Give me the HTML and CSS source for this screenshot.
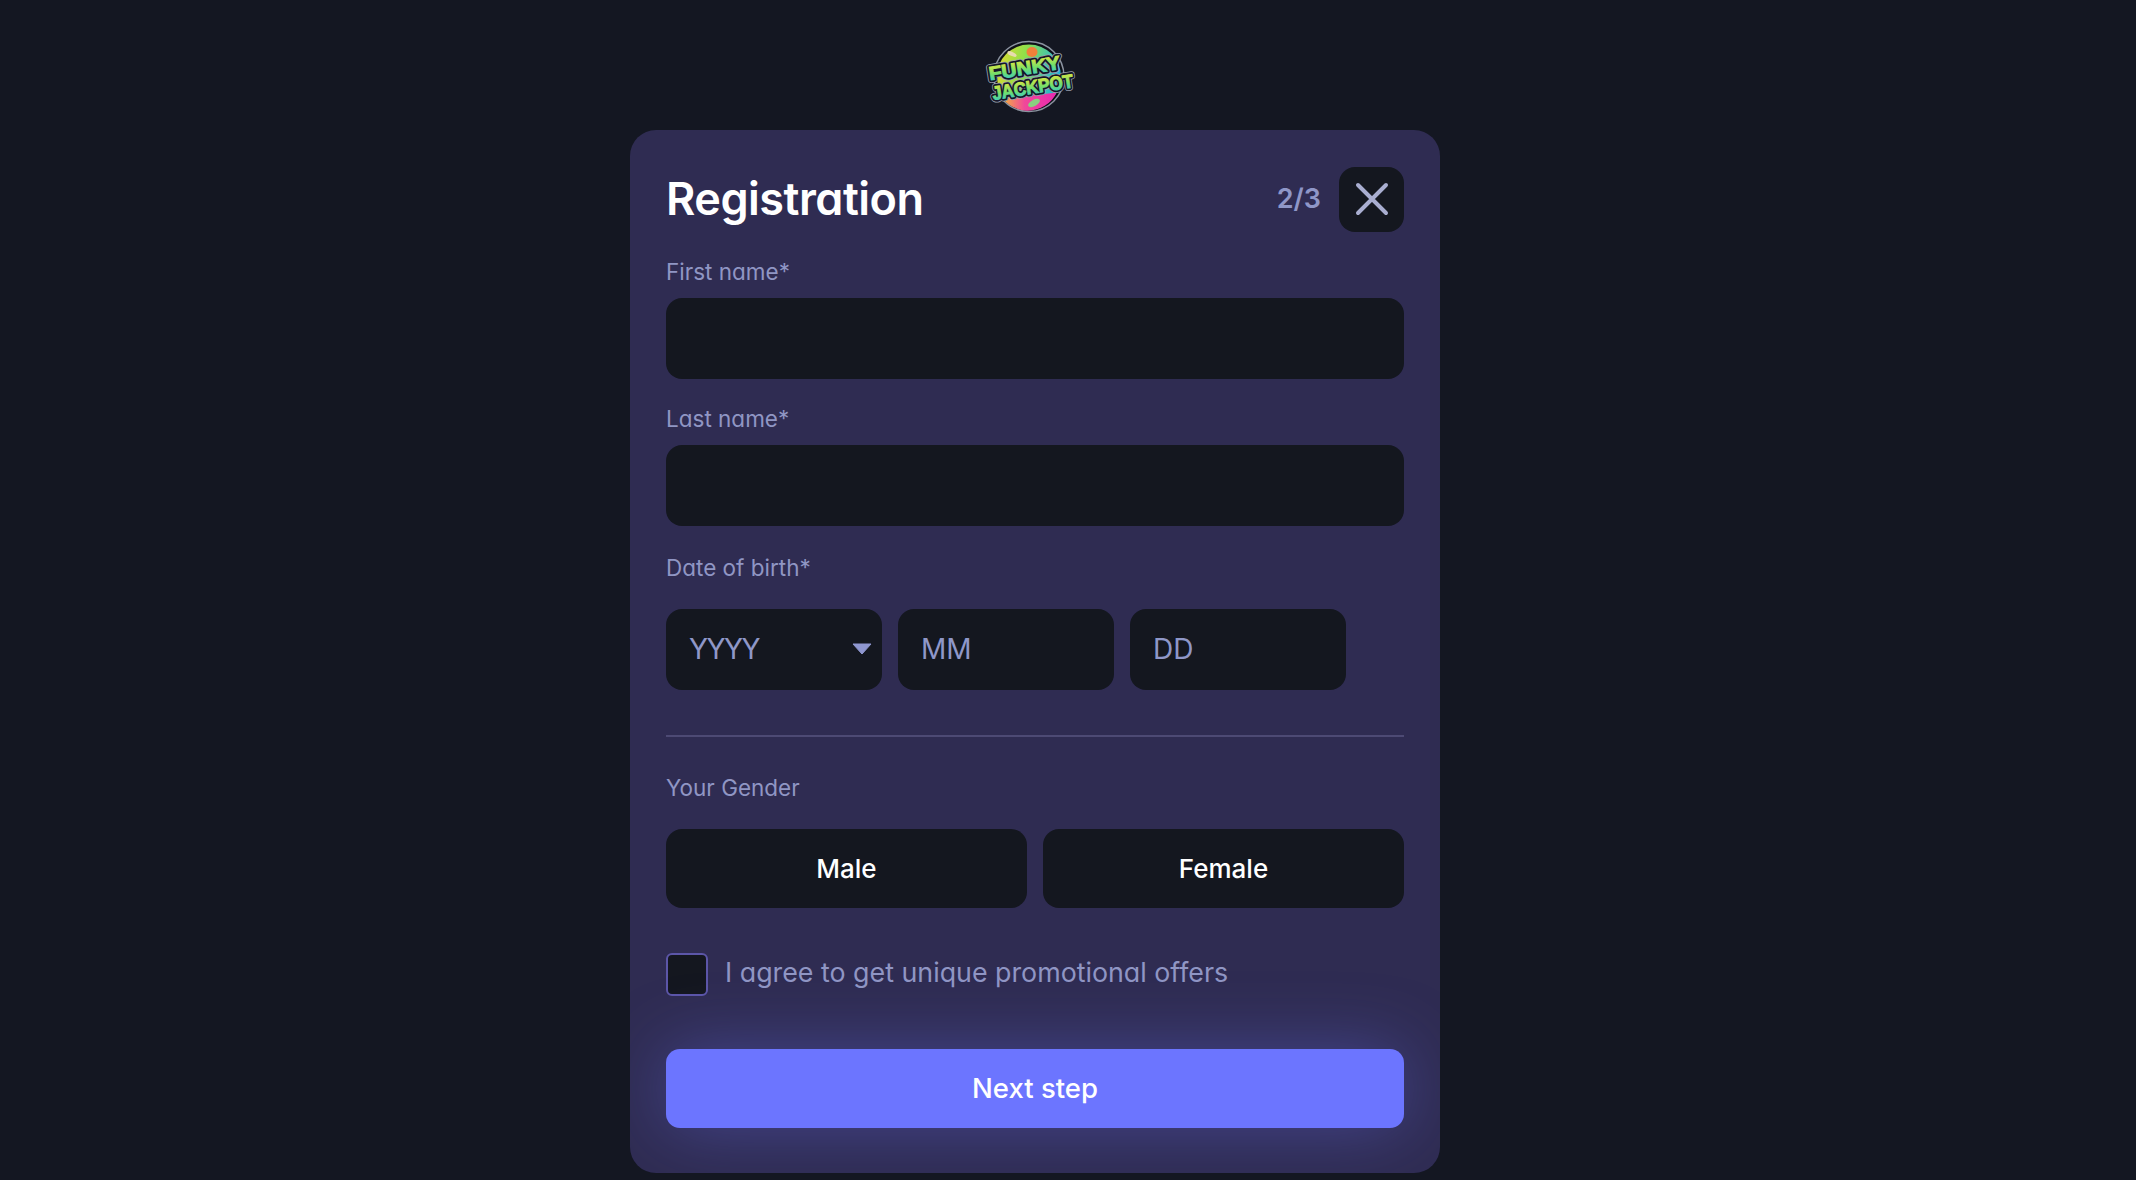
FILE: index.html
```html
<!DOCTYPE html>
<html lang="en">

<head>
    <meta charset="UTF-8">
    <meta name="viewport" content="width=device-width, initial-scale=1.0">
    <title>Registration - Funky Jackpot</title>
    <link rel="stylesheet" href="styles.css">
</head>

<body>
    <div class="page">
        <div class="logo">
            <svg width="110" height="74" viewBox="-8 0 110 74">
                <defs>
                    <linearGradient id="discFill" x1="0" y1="0" x2="1" y2="0.2">
                        <stop offset="0" stop-color="#e6d82e"/>
                        <stop offset="0.45" stop-color="#8fe04a"/>
                        <stop offset="1" stop-color="#1fb6d8"/>
                    </linearGradient>
                    <linearGradient id="discLower" x1="0" y1="0" x2="1" y2="0">
                        <stop offset="0" stop-color="#f7c92a"/>
                        <stop offset="0.45" stop-color="#f0489a"/>
                        <stop offset="1" stop-color="#e828b0"/>
                    </linearGradient>
                    <linearGradient id="textFill" x1="0" y1="0" x2="0" y2="1">
                        <stop offset="0" stop-color="#f4e83a"/>
                        <stop offset="0.55" stop-color="#74e06a"/>
                        <stop offset="1" stop-color="#2ec4d8"/>
                    </linearGradient>
                </defs>
                <circle cx="47" cy="36.5" r="35" fill="#0e1018" stroke="#8b93a0" stroke-width="1.5"/>
                <circle cx="47" cy="36.5" r="32" fill="url(#discFill)"/>
                <path d="M16 50a32 32 0 0 0 59 2c-18 4-40 4-59-2z" fill="url(#discLower)"/>
                <ellipse cx="50" cy="12" rx="5.5" ry="5" fill="#f0803a"/>
                <ellipse cx="30" cy="14" rx="5" ry="2" fill="#e8dcb0" transform="rotate(25 30 14)"/>
                <ellipse cx="52" cy="63" rx="6.5" ry="3.2" fill="#8ad080" transform="rotate(-28 52 63)"/>
                <g transform="rotate(-9 47 37)">
                    <text class="logo-line logo-edge" x="44" y="34" textLength="72" lengthAdjust="spacingAndGlyphs">FUNKY</text>
                    <text class="logo-line logo-edge" x="49" y="54" textLength="82" lengthAdjust="spacingAndGlyphs">JACKPOT</text>
                    <text class="logo-line logo-rim" x="44" y="34" textLength="72" lengthAdjust="spacingAndGlyphs">FUNKY</text>
                    <text class="logo-line logo-rim" x="49" y="54" textLength="82" lengthAdjust="spacingAndGlyphs">JACKPOT</text>
                    <text class="logo-line" x="44" y="34" textLength="72" lengthAdjust="spacingAndGlyphs">FUNKY</text>
                    <text class="logo-line" x="49" y="54" textLength="82" lengthAdjust="spacingAndGlyphs">JACKPOT</text>
                </g>
            </svg>
        </div>

        <div class="panel">
            <div class="panel-head">
                <h1>Registration</h1>
                <div class="head-right">
                    <span class="step">2/3</span>
                    <button type="button" class="close-button" aria-label="Close">
                        <svg width="34" height="34" viewBox="0 0 34 34">
                            <path d="M3 3L31 31M31 3L3 31" stroke="#a9aed0" stroke-width="4" stroke-linecap="round"/>
                        </svg>
                    </button>
                </div>
            </div>

            <form class="reg-form">
                <label class="field-label" for="firstName">First name*</label>
                <input class="text-input" type="text" id="firstName">

                <label class="field-label" for="lastName">Last name*</label>
                <input class="text-input" type="text" id="lastName">

                <div class="field-label dob-label">Date of birth*</div>
                <div class="dob-row">
                    <div class="select-wrap">
                        <select class="dob-input year-select">
                            <option>YYYY</option>
                        </select>
                        <svg class="select-arrow" width="20" height="12" viewBox="0 0 20 12">
                            <path d="M1 1h18l-9 10z" fill="#8f97d0" stroke="#8f97d0" stroke-linejoin="round"/>
                        </svg>
                    </div>
                    <input class="dob-input" type="text" placeholder="MM">
                    <input class="dob-input" type="text" placeholder="DD">
                </div>

                <hr class="divider">

                <div class="field-label gender-label">Your Gender</div>
                <div class="gender-row">
                    <button type="button" class="gender-button">Male</button>
                    <button type="button" class="gender-button">Female</button>
                </div>

                <label class="promo-row">
                    <input type="checkbox" class="promo-check">
                    <span class="promo-text">I agree to get unique promotional offers</span>
                </label>

                <button type="submit" class="next-button">Next step</button>
            </form>
        </div>
    </div>
</body>
</html>
```

FILE: styles.css
```css
* {
    box-sizing: border-box;
}

html,
body {
    height: 100%;
}

body {
    margin: 0;
    background-color: #141722;
    color: #fff;
    font-family: Inter, "Noto Sans", sans-serif;
    font-feature-settings: "cv11" 1;
    overflow: hidden;
}

.page {
    display: flex;
    flex-direction: column;
    align-items: center;
    padding-top: 40px;
    padding-right: 66px;
}

.logo {
    height: 74px;
    margin-bottom: 16px;
    margin-right: 12px;
}

.logo svg {
    display: block;
}

.logo-line {
    font-family: "Liberation Sans", sans-serif;
    font-weight: bold;
    font-size: 19px;
    text-anchor: middle;
    fill: url(#textFill);
    stroke: url(#textFill);
    stroke-width: 1px;
}

.logo-rim {
    fill: #14162a;
    stroke: #14162a;
    stroke-width: 4.5px;
    stroke-linejoin: round;
}

.logo-edge {
    fill: #9aa0ae;
    stroke: #9aa0ae;
    stroke-width: 6px;
    stroke-linejoin: round;
}

.panel {
    width: 810px;
    padding: 36px 36px 45px;
    overflow: hidden;
    background-color: #2f2c52;
    border-radius: 26px;
}

.panel-head {
    display: flex;
    justify-content: space-between;
    align-items: center;
    height: 66px;
    margin-bottom: 25px;
}

.panel-head h1 {
    margin: 0 0 2px;
    font-size: 45px;
    font-weight: 600;
    letter-spacing: -0.5px;
}

.head-right {
    display: flex;
    align-items: center;
    gap: 18px;
}

.step {
    margin-bottom: 2px;
    color: #8f97c8;
    font-size: 27px;
    font-weight: 600;
}

.close-button {
    display: flex;
    align-items: center;
    justify-content: center;
    width: 65px;
    height: 65px;
    padding: 0;
    border: none;
    border-radius: 16px;
    background-color: #14171f;
}

.reg-form {
    display: flex;
    flex-direction: column;
}

.field-label {
    height: 30px;
    margin-bottom: 11px;
    color: #9096c4;
    font-size: 22.5px;
    line-height: 30px;
}

.text-input {
    width: 100%;
    height: 81px;
    margin-bottom: 25px;
    border: none;
    border-radius: 16px;
    background-color: #14171f;
}

.dob-label {
    margin-top: 2px;
    margin-bottom: 26px;
}

.dob-row {
    display: flex;
    gap: 16px;
}

.select-wrap {
    position: relative;
    width: 216px;
}

.dob-input {
    width: 216px;
    height: 81px;
    padding: 0 23px 2px;
    border: none;
    border-radius: 16px;
    background-color: #14171f;
    color: #8f97c8;
    font-family: inherit;
    font-size: 28px;
    appearance: none;
    outline: none;
}

.dob-input::placeholder {
    color: #8f97c8;
    opacity: 1;
}

.year-select {
    letter-spacing: -1.5px;
}

.select-arrow {
    position: absolute;
    top: 34px;
    right: 10px;
}

.divider {
    width: 100%;
    height: 2px;
    margin: 45px 0 36px;
    border: none;
    background-color: #4d4a74;
}

.gender-label {
    margin-bottom: 26px;
}

.gender-row {
    display: flex;
    gap: 16px;
}

.gender-button {
    flex: 1;
    height: 79px;
    border: none;
    border-radius: 16px;
    background-color: #14171f;
    color: #fff;
    font-family: inherit;
    font-size: 26px;
    font-weight: 500;
}

.promo-row {
    display: flex;
    align-items: center;
    gap: 17px;
    margin-top: 45px;
    color: #9096c4;
    font-size: 26.8px;
}

.promo-text {
    margin-bottom: 6px;
}

.promo-check {
    width: 42px;
    height: 43px;
    margin: 0;
    border: 2px solid #5c56a8;
    border-radius: 6px;
    background-color: #14171f;
    appearance: none;
}

.next-button {
    width: 100%;
    height: 79px;
    margin-top: 53px;
    padding-bottom: 2px;
    border: none;
    border-radius: 14px;
    background-color: #6c75ff;
    box-shadow: 0 0 70px rgba(108, 117, 255, 0.35);
    color: #fff;
    font-family: inherit;
    font-size: 27.5px;
    font-weight: 500;
}
```
